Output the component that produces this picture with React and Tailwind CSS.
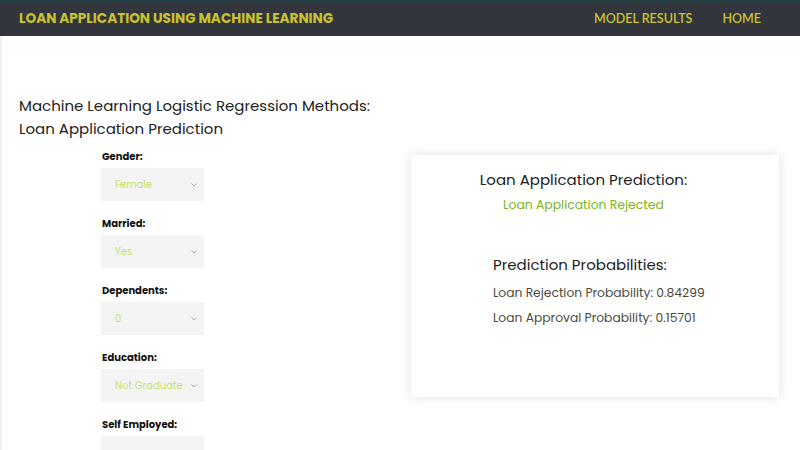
const fields = [
  { label: "Gender:", value: "Female" },
  { label: "Married:", value: "Yes" },
  { label: "Dependents:", value: "0" },
  { label: "Education:", value: "Not Graduate" },
  { label: "Self Employed:", value: "" },
];

function Chevron() {
  return (
    <svg width="6" height="4" viewBox="0 0 6 4" className="shrink-0">
      <path d="M0.5 0.5 L3 3 L5.5 0.5" fill="none" stroke="#aaa" strokeWidth="1" />
    </svg>
  );
}

function SelectField({ label, value }) {
  return (
    <div className="flex flex-col">
      <label className="text-[10px] font-bold text-[#111] leading-[14px] pl-px">{label}</label>
      <div className="mt-[4px] w-[103px] h-[33px] bg-[#f4f4f4] flex items-center justify-between pl-[14px] pr-[7px]">
        <span className="text-[10px] text-[#c6e36b]">{value}</span>
        {value && <Chevron />}
      </div>
    </div>
  );
}

export default function App() {
  return (
    <div className="w-[800px] h-[450px] overflow-hidden bg-white font-['Poppins','Noto_Sans',sans-serif]">
      <header className="h-[36px] bg-[#32363c] border-t-2 border-[#1f4447] flex items-center justify-between pl-[19px] pr-[39px]">
        <h1 className="text-[13.6px] font-bold text-[#c9c22f]">
          LOAN APPLICATION USING MACHINE LEARNING
        </h1>
        <nav className="flex gap-[30px] font-['Lato',sans-serif] text-[12.5px] font-semibold text-[#c9c22f]">
          <span>MODEL RESULTS</span>
          <span>HOME</span>
        </nav>
      </header>
      <main className="border-l-2 border-[#f0f0f0] pl-[17px] pt-[58px]">
        <h2 className="text-[15px] leading-[23px] text-[#222]">
          Machine Learning Logistic Regression Methods:
          <br />
          Loan Application Prediction
        </h2>
        <div className="flex mt-[10px]">
          <div className="w-[392px] pl-[82px] flex flex-col gap-[16px]">
            {fields.map((f) => (
              <SelectField key={f.label} label={f.label} value={f.value} />
            ))}
          </div>
          <div className="mt-[5px] w-[368px] h-[242px] bg-white shadow-[0_0_12px_rgba(0,0,0,0.12)]">
            <div className="w-[345px] flex flex-col items-center pt-[14px]">
              <p className="text-[15px] text-[#222]">Loan Application Prediction:</p>
              <p className="mt-[4px] text-[12.4px] text-[#7cb518]">Loan Application Rejected</p>
            </div>
            <div className="pl-[82px] pt-[40px]">
              <p className="text-[15px] text-[#222]">Prediction Probabilities:</p>
              <p className="mt-[7px] text-[12.3px] text-[#4b4b3c]">Loan Rejection Probability: 0.84299</p>
              <p className="mt-[7px] text-[12.3px] text-[#4b4b3c]">Loan Approval Probability: 0.15701</p>
            </div>
          </div>
        </div>
      </main>
    </div>
  );
}
